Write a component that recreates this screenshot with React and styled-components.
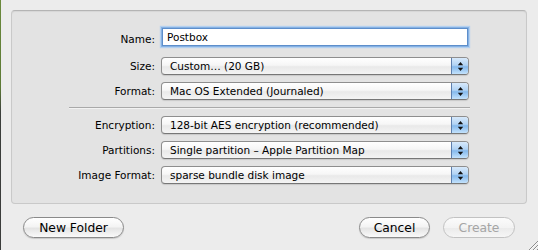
import React from 'react';
import styled, {createGlobalStyle, css} from 'styled-components';

const Global = createGlobalStyle`
  html, body {
    margin: 0;
    padding: 0;
    background: #ececec;
  }
`;

const Window = styled.div`
  position: relative;
  box-sizing: border-box;
  width: 538px;
  height: 250px;
  padding: 10px 11px 0;
  background: #ececec;
  border-left: 1px solid #3d3f3d;
  border-image: linear-gradient(#6b8a3c, #5d7a36 35%, #3d403d 45%, #3a3c3a) 1;
  font-family: "DejaVu Sans", "Lucida Grande", Verdana, sans-serif;
  display: flex;
  flex-direction: column;
`;

const Group = styled.div`
  box-sizing: border-box;
  background: #e3e3e3;
  border: 1px solid #c9c9c9;
  border-top-color: #b4b4b4;
  border-radius: 4px;
  box-shadow: inset 0 1px 1px rgba(0,0,0,.06);
  padding: 17px 0 19px;
  margin-left: -1px;
  display: grid;
  grid-template-columns: 143px 310px;
  column-gap: 5px;
  row-gap: 7px;
  align-items: center;
`;

const Label = styled.div`
  text-align: right;
  font-size: 10.5px;
  color: #000;
  white-space: nowrap;
`;

const TextField = styled.div`
  box-sizing: border-box;
  height: 18px;
  margin: 0 2px 4px;
  padding: 0 4px;
  background: #fff;
  border: 1px solid #5d8ecb;
  box-shadow: 0 0 0 1px #86b1e2, 0 0 1px 2px #b3d0f0;
  font-size: 10.5px;
  line-height: 16px;
  color: #000;
`;

const Popup = styled.div`
  box-sizing: border-box;
  height: 18px;
  margin-left: 1px;
  margin-right: 1px;
  display: flex;
  border: 1px solid #8e8e8e;
  border-bottom-color: #777;
  border-radius: 4px;
  overflow: hidden;
  background: linear-gradient(#ffffff, #f6f6f6 45%, #e9e9e9 55%, #f4f4f4);
  box-shadow: 0 1px 1px rgba(0,0,0,.12);
`;

const PopupText = styled.div`
  flex: 1;
  padding-left: 8px;
  font-size: 10.5px;
  line-height: 16px;
  color: #000;
  white-space: nowrap;
`;

const Stepper = styled.div`
  width: 16px;
  border-left: 1px solid #5d7fae;
  background: linear-gradient(#d7e9fb, #b1d3f4 45%, #85b9ec 55%, #c3e2fc);
  display: flex;
  align-items: center;
  justify-content: center;
`;

const Separator = styled.div`
  grid-column: 1 / -1;
  margin-left: 57px;
  height: 1px;
  background: #a9a9a9;
  border-bottom: 1px solid #f2f2f2;
`;

const Footer = styled.div`
  display: flex;
  align-items: center;
  gap: 13px;
  padding: 13px 12px 0 11px;
`;

const Spacer = styled.div`
  flex: 1;
`;

const Button = styled.button`
  box-sizing: border-box;
  height: 21px;
  width: ${p => p.$width}px;
  padding: 0;
  border-radius: 11px;
  border: 1px solid #8a8a8a;
  background: linear-gradient(#ffffff, #f4f4f4 45%, #e4e4e4 55%, #fafafa);
  box-shadow: 0 1px 1px rgba(0,0,0,.15);
  font-family: "DejaVu Sans", "Lucida Grande", Verdana, sans-serif;
  font-size: 12.3px;
  color: #000;
  cursor: pointer;
  ${p => p.disabled && css`
    border-color: #c2c2c2;
    background: linear-gradient(#fbfbfb, #f3f3f3 50%, #ebebeb 55%, #f6f6f6);
    box-shadow: none;
    color: #a5a5a5;
    cursor: default;
  `}
`;

const Grip = styled.svg`
  position: absolute;
  right: 0;
  bottom: 0;
`;

const Arrows = () => (
  <svg width="7" height="11" viewBox="0 0 7 11">
    <path d="M3.5 1 L6.2 4.2 H0.8 Z" fill="#111"/>
    <path d="M3.5 10 L6.2 6.8 H0.8 Z" fill="#111"/>
  </svg>
);

const Select = ({children}) => (
  <Popup>
    <PopupText>{children}</PopupText>
    <Stepper><Arrows/></Stepper>
  </Popup>
);

const rows = [
  ['Size:', 'Custom… (20 GB)'],
  ['Format:', 'Mac OS Extended (Journaled)'],
];

const rows2 = [
  ['Encryption:', '128-bit AES encryption (recommended)'],
  ['Partitions:', 'Single partition – Apple Partition Map'],
  ['Image Format:', 'sparse bundle disk image'],
];

export default function App() {
  return <>
    <Global/>
    <Window>
      <Group>
        <Label>Name:</Label>
        <TextField>Postbox</TextField>
        {rows.map(([l, v]) => <React.Fragment key={l}>
          <Label>{l}</Label>
          <Select>{v}</Select>
        </React.Fragment>)}
        <Separator/>
        {rows2.map(([l, v]) => <React.Fragment key={l}>
          <Label>{l}</Label>
          <Select>{v}</Select>
        </React.Fragment>)}
      </Group>
      <Footer>
        <Button $width={101}>New Folder</Button>
        <Spacer/>
        <Button $width={71}>Cancel</Button>
        <Button $width={72} disabled>Create</Button>
      </Footer>
      <Grip width="12" height="12" viewBox="0 0 12 12">
        <path d="M3 12 L12 3 M7 12 L12 7 M11 12 L12 11" stroke="#8c8c8c" strokeWidth="1"/>
        <path d="M4 12 L12 4 M8 12 L12 8" stroke="#fafafa" strokeWidth="1"/>
      </Grip>
    </Window>
  </>;
}
